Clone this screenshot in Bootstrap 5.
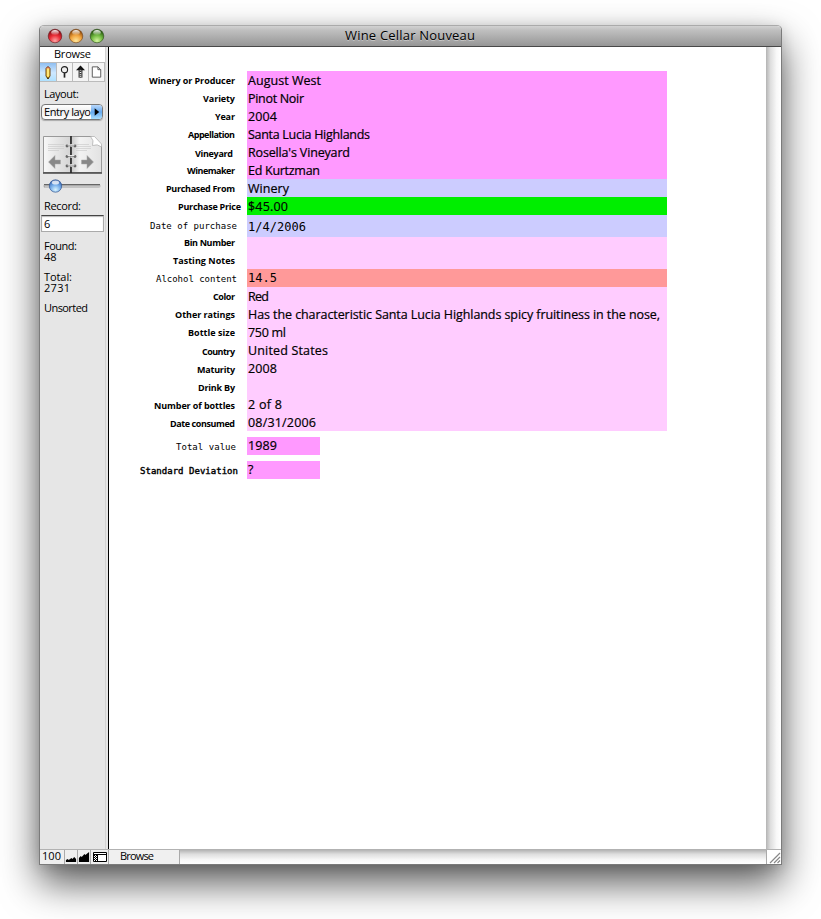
<!DOCTYPE html>
<html lang="en">
<head>
<meta charset="utf-8">
<title>Wine Cellar Nouveau</title>
<link href="https://cdn.jsdelivr.net/npm/bootstrap@5.3.0/dist/css/bootstrap.min.css" rel="stylesheet">
<style>
html, body { height: 919px; overflow: hidden; background: #fff; }
body { font-family: "Open Sans", "Noto Sans", sans-serif; font-size: 11px; line-height: 11px; color: #000; padding: 25px 39px 0; }
.win { width: 743px; height: 840px; border-radius: 5px 5px 0 0; border: 1px solid #7b7b7b; border-top-color: #aaa; background: #fff;
  box-shadow: 0 18px 38px rgba(0,0,0,.66), 0 2px 14px rgba(0,0,0,.12); }
.titlebar { height: 21px; border-radius: 4px 4px 0 0; background: linear-gradient(#d2d2d2, #c0c0c0 20%, #969696); border-bottom: 1px solid #484848; padding-left: 7px; }
.titlebar h1 { font-size: 13px; line-height: 18px; font-weight: 400; text-shadow: 0 1px 0 rgba(255,255,255,.4); margin-left: 240px; }
[data-w] { white-space: nowrap; }
.lights { width: 58px; height: 16px; margin-top: 2px; }
.side { width: 69px; background: #e6e6e6; border-right: 1px solid #000; }
.panel { width: 66px; border-right: 1px solid #d2d2d2; }
.mode { height: 15px; background: #fff; line-height: 14px; }
.tools { height: 20px; background: #f4f4f4; border: solid #bbb; border-width: 1px 0; }
.tools svg { width: 16px; height: 18px; border-right: 1px solid #bbb; }
.tools svg:first-child { width: 17px; background: linear-gradient(#8fbef0, #cfe8ff 55%, #aee1ff); }
.picker { width: 62px; height: 16px; margin: 4px 0 0 1px; border: 1px solid #777; border-radius: 4px; background: linear-gradient(#fff, #eee 50%, #fff); line-height: 13px; overflow: hidden; box-shadow: 0 1px 1px #aaa; padding-left: 2px; }
.picker svg { width: 11px; height: 14px; background: linear-gradient(#b9d8fb, #66a9ef 50%, #a9e0ff); }
.recfield { width: 63px; height: 17px; margin: 4px 0 0 1px; border: 1px solid #aaa; border-top-color: #444; background: #fff; box-shadow: inset 0 1px 1px #bbb; line-height: 15px; padding-left: 2px; }
.pl { padding-left: 4px; }
.sheet { padding-top: 24px; width: 657px; }
.vbar { width: 15px; background: linear-gradient(90deg, #b4b4b4, #dedede 30%, #f8f8f8 70%, #fff); }
.statusbar { height: 15px; border-top: 1px solid #b2b2b2; background: #efefef; line-height: 12px; }
.statusbar svg { height: 14px; border-left: 1px solid #aaa; }
.hbar { background: linear-gradient(#b4b4b4, #dedede 30%, #f8f8f8 70%, #fff); border-left: 1px solid #aaa; }
.tab { width: 71px; padding-left: 11px; background: #f0f0f0; border-left: 1px solid #aaa; }
.rec { height: 18px; }
.rec.tall { height: 22px; }
.rec.short { height: 16px; }
.key { width: 138px; padding-right: 12px; font: bold 9px/18px "Comic Sans MS", "Open Sans", sans-serif; text-align: right; white-space: nowrap; padding-top: 1px; }
.val { width: 420px; padding-left: 1px; font: 12.5px/20px "Comic Sans MS", "Open Sans", sans-serif; -webkit-text-stroke: .2px #000; white-space: nowrap; background: #fcf; height: 100%; }
.mono .key { font: 9px/18px "Andale Mono", "DejaVu Sans Mono", monospace; padding-right: 10px; }
.mono .val { font: 12px/18px "Andale Mono", "DejaVu Sans Mono", monospace; -webkit-text-stroke: 0; }
.tall .key { padding-top: 2px; }
.tall .val { line-height: 24px; }
.short .key { line-height: 10px; }
.low .key { padding-top: 2px; }
.comic .val { font: 12.5px/18px "Comic Sans MS", "Open Sans", sans-serif; -webkit-text-stroke: .2px #000; }
.comic .key { padding-top: 1px; }
.out .key { padding-right: 6px; }
.in .key { padding-right: 14px; }
.edge .key { padding-right: 11px; }
.heavy { -webkit-text-stroke: .4px #000; }
.pink .val { background: #f9f; }
.blue .val { background: #ccf; }
.green .val { background: #0e0; }
.salmon .val { background: #f99; }
.calc { margin-top: 6px; }
.calc .val { width: 73px; }
.calc .key { padding-right: 9px; }
.calc.edge .key { padding-right: 11px; }
</style>
<script src="https://cdn.jsdelivr.net/npm/bootstrap@5.3.0/dist/js/bootstrap.bundle.min.js"></script>
</head>
<body>
<main class="win d-flex flex-column">
  <header class="titlebar d-flex flex-shrink-0">
    <svg class="lights flex-shrink-0" viewBox="0 0 58 16">
      <defs>
        <radialGradient id="r" cx=".5" cy=".85" r=".75"><stop offset="0" stop-color="#ffa5a5"/><stop offset=".55" stop-color="#e92b35"/><stop offset="1" stop-color="#8b1018"/></radialGradient>
        <radialGradient id="o" cx=".5" cy=".85" r=".75"><stop offset="0" stop-color="#ffe79a"/><stop offset=".55" stop-color="#f0a23c"/><stop offset="1" stop-color="#8f4a0a"/></radialGradient>
        <radialGradient id="g" cx=".5" cy=".85" r=".75"><stop offset="0" stop-color="#d5f7a0"/><stop offset=".55" stop-color="#70b840"/><stop offset="1" stop-color="#28590f"/></radialGradient>
        <linearGradient id="h" x2="0" y2="1"><stop offset="0" stop-color="#fff" stop-opacity=".95"/><stop offset="1" stop-color="#fff" stop-opacity=".1"/></linearGradient>
      </defs>
      <g stroke-opacity=".7" stroke-width=".8"><circle cx="8" cy="8" r="6.8" fill="url(#r)" stroke="#5d1015"/><circle cx="29" cy="8" r="6.8" fill="url(#o)" stroke="#6b3b10"/><circle cx="50" cy="8" r="6.8" fill="url(#g)" stroke="#23480f"/></g>
      <g fill="url(#h)"><ellipse cx="8" cy="4.4" rx="3.8" ry="2.5"/><ellipse cx="29" cy="4.4" rx="3.8" ry="2.5"/><ellipse cx="50" cy="4.4" rx="3.8" ry="2.5"/></g>
    </svg>
    <h1 class="mb-0"><span data-w="130">Wine Cellar Nouveau</span></h1>
  </header>
  <div class="d-flex flex-grow-1">
    <aside class="side flex-shrink-0">
      <div class="panel h-100">
        <div class="mode text-center"><span data-w="37">Browse</span></div>
        <div class="tools d-flex">
          <svg viewBox="0 0 16 18"><path d="M6 5.500Q8 2 10 5.500V13L8 16 6 13z" fill="#ffd94a" stroke="#6b4310"/><path d="M6.200 5.500Q8 2.500 9.800 5.500" fill="#e98" stroke="#a33" stroke-width=".6"/><path d="M8 6v7" stroke="#fff3a8"/><path d="M7.200 14.500h1.600L8 16z"/></svg>
          <svg viewBox="0 0 16 18"><circle cx="8" cy="6.500" r="3.300" fill="#eee" stroke="#222" stroke-width="1.200"/><path d="M8 10v5" stroke="#222" stroke-width="1.800"/></svg>
          <svg viewBox="0 0 16 18"><path d="M8 2 3.200 7h9.600z" fill="#111"/><path d="M6.500 6v9M9.500 6v9" stroke="#111"/><path d="M8 6v9" stroke="#333" stroke-width="2" stroke-dasharray="1 1"/></svg>
          <svg viewBox="0 0 16 18"><path d="M3.500 3.500h6l3 3v8h-9zM9.500 3.500v3h3" fill="#fff" stroke="#555"/></svg>
        </div>
        <div class="pl" style="padding-top:6px"><span data-w="35">Layout:</span></div>
        <div class="picker d-flex justify-content-between" style="margin-top:5px"><span data-w="47">Entry layo</span><svg class="flex-shrink-0" viewBox="0 0 12 14"><path d="M4 3 9 7l-5 4z"/></svg></div>
        <svg class="d-block" style="margin:14px 0 0 2px" width="62" height="42" viewBox="0 0 62 42">
          <defs><linearGradient id="pg"><stop offset="0" stop-color="#f8f8f8"/><stop offset="1" stop-color="#d4d4d4"/></linearGradient><linearGradient id="pr"><stop offset="0" stop-color="#c4c4c4"/><stop offset=".3" stop-color="#f2f2f2"/><stop offset="1" stop-color="#e2e2e2"/></linearGradient></defs>
          <path d="M1.500 2.500h27v36h-27z" fill="url(#pg)" stroke="#999"/><path d="M28.500 2.500h21l10 9.500v26.500h-31z" fill="url(#pr)" stroke="#999"/>
          <path d="M48.500 2.500q4 4 2 9 5-2 9 1.500V10l-7-7.500z" fill="#fff" stroke="#aaa" stroke-width=".7"/>
          <path d="M1 39h59" stroke="#444" stroke-width="1.500"/>
          <path d="M6 10.500h16M6 12.500h16M6 14.500h16M6 16.500h11M34 10.500h13M34 12.500h15M34 14.500h15M34 16.500h11" stroke="#ccc" stroke-width=".7"/>
          <path d="M29 2v8M29 13v8M29 24v6M29 33v6" stroke="#222" stroke-width="1.600"/>
          <path d="M25 11.500h8M25 22h8M25 31.500h8" fill="none" stroke="#888" stroke-width="1.600"/>
          <g fill="#666"><circle cx="25" cy="12" r="1.400"/><circle cx="33" cy="12" r="1.400"/><circle cx="25" cy="22.500" r="1.400"/><circle cx="33" cy="22.500" r="1.400"/><circle cx="25" cy="32" r="1.400"/><circle cx="33" cy="32" r="1.400"/></g>
          <path d="M25.500 11h7M25.500 21.500h7M25.500 31h7" stroke="#fff" stroke-width=".8"/>
          <path d="M6.500 28 13 21.500v4.500h5.500v4H13v4.500zM51.500 28 45 21.500v4.500h-5.500v4H45v4.500z" fill="#888" stroke="#aaa" stroke-width=".5"/>
        </svg>
        <svg class="d-block" style="margin:2px 0 0 3px" width="60" height="16" viewBox="0 0 60 16">
          <defs><radialGradient id="kn" cx=".5" cy=".8" r=".8"><stop offset="0" stop-color="#d8f4ff"/><stop offset=".5" stop-color="#77aeea"/><stop offset="1" stop-color="#2f5ca8"/></radialGradient></defs>
          <rect x=".5" y="6" width="57" height="4" rx="2" fill="#aaa"/><path d="M1 6.500h56" stroke="#666"/><path d="M2 9h55" stroke="#ddd"/>
          <circle cx="12.500" cy="8" r="6.200" fill="url(#kn)" stroke="#34568f" stroke-width=".7"/><ellipse cx="12.500" cy="4.600" rx="3.600" ry="2" fill="#fff" opacity=".75"/>
        </svg>
        <div class="pl" style="padding-top:6px"><span data-w="37">Record:</span></div>
        <div class="recfield"><span>6</span></div>
        <div class="pl" style="padding-top:8px"><span data-w="33">Found:</span><br><span data-w="12.500">48</span></div>
        <div class="pl" style="padding-top:9px"><span data-w="28">Total:</span><br><span data-w="26">2731</span></div>
        <div class="pl" style="padding-top:9px"><span data-w="44">Unsorted</span></div>
      </div>
    </aside>
    <section class="sheet">
      <div class="rec pink d-flex"><div class="key"><span data-w="86">Winery or Producer</span></div><div class="val"><span data-w="73">August West</span></div></div>
      <div class="rec pink d-flex"><div class="key"><span data-w="32">Variety</span></div><div class="val"><span data-w="56">Pinot Noir</span></div></div>
      <div class="rec pink d-flex"><div class="key"><span data-w="20">Year</span></div><div class="val"><span data-w="29">2004</span></div></div>
      <div class="rec pink d-flex"><div class="key"><span data-w="47">Appellation</span></div><div class="val"><span data-w="122">Santa Lucia Highlands</span></div></div>
      <div class="rec pink d-flex low in"><div class="key"><span data-w="38">Vineyard</span></div><div class="val"><span data-w="102">Rosella's Vineyard</span></div></div>
      <div class="rec pink d-flex"><div class="key"><span data-w="48">Winemaker</span></div><div class="val"><span data-w="72">Ed Kurtzman</span></div></div>
      <div class="rec blue d-flex"><div class="key"><span data-w="69">Purchased From</span></div><div class="val"><span data-w="41">Winery</span></div></div>
      <div class="rec green d-flex out"><div class="key"><span data-w="63">Purchase Price</span></div><div class="val"><span data-w="40">$45.00</span></div></div>
      <div class="rec blue d-flex mono tall"><div class="key"><span data-w="87">Date of purchase</span></div><div class="val"><span data-w="58">1/4/2006</span></div></div>
      <div class="rec short d-flex"><div class="key"><span data-w="51">Bin Number</span></div><div class="val"></div></div>
      <div class="rec short d-flex"><div class="key" style="padding-top:3px"><span data-w="62">Tasting Notes</span></div><div class="val"></div></div>
      <div class="rec salmon d-flex mono"><div class="key"><span data-w="81">Alcohol content</span></div><div class="val"><span data-w="29">14.5</span></div></div>
      <div class="rec d-flex"><div class="key"><span data-w="22">Color</span></div><div class="val"><span data-w="21">Red</span></div></div>
      <div class="rec d-flex"><div class="key"><span data-w="60">Other ratings</span></div><div class="val"><span data-w="412">Has the characteristic Santa Lucia Highlands spicy fruitiness in the nose,</span></div></div>
      <div class="rec d-flex"><div class="key"><span data-w="47">Bottle size</span></div><div class="val"><span data-w="38">750 ml</span></div></div>
      <div class="rec d-flex low"><div class="key"><span data-w="33">Country</span></div><div class="val"><span data-w="80">United States</span></div></div>
      <div class="rec d-flex low"><div class="key"><span data-w="38">Maturity</span></div><div class="val"><span data-w="29">2008</span></div></div>
      <div class="rec d-flex low"><div class="key"><span data-w="37">Drink By</span></div><div class="val"></div></div>
      <div class="rec d-flex low"><div class="key"><span data-w="81">Number of bottles</span></div><div class="val"><span data-w="34">2 of 8</span></div></div>
      <div class="rec d-flex low"><div class="key"><span data-w="65">Date consumed</span></div><div class="val"><span data-w="68">08/31/2006</span></div></div>
      <div class="rec pink calc mono comic edge d-flex"><div class="key"><span data-w="60">Total value</span></div><div class="val"><span data-w="29">1989</span></div></div>
      <div class="rec pink calc mono comic d-flex"><div class="key"><span data-w="98" class="heavy">Standard Deviation</span></div><div class="val"><span>?</span></div></div>
    </section>
    <div class="vbar flex-shrink-0"></div>
  </div>
  <footer class="statusbar d-flex flex-shrink-0">
    <div style="width:24px;padding-left:2px"><span data-w="19">100</span></div>
    <svg width="13" viewBox="0 0 13 14" preserveAspectRatio="none"><path d="M1 12v-2l2-1 1 1 3-2 1 1 2-2 2 2v3z"/></svg>
    <svg width="13" viewBox="0 0 13 14" preserveAspectRatio="none"><path d="M1 12V8l2-2 1 1 3-3 1 1 4-3v10z"/></svg>
    <svg width="18" viewBox="0 0 17 14"><path d="M2.500 2.500h13v9h-13z" fill="#fff" stroke="#000"/><path d="M2 4.500h14M6.500 4v8" stroke="#000"/><path d="M3 5.500h3M3 7.500h3M3 9.500h3" stroke="#000" stroke-dasharray="1 1"/><path d="M3 6.500h3M3 8.500h3M3 10.500h3" stroke="#000" stroke-dasharray="1 1" stroke-dashoffset="1"/></svg>
    <div class="tab"><span data-w="34">Browse</span></div>
    <div class="hbar flex-grow-1"></div>
    <svg width="15" viewBox="0 0 14 14" style="background:#fff"><path d="M3 13 13 3M7 13l6-6M10.500 13 13 10.500" stroke="#888" stroke-width="1.200"/></svg>
  </footer>
</main>
<script>
document.querySelectorAll('[data-w]').forEach(function (el) {
  var n = el.textContent.length, w = el.getBoundingClientRect().width;
  var s = (parseFloat(el.dataset.w) - w) / (n - 1);
  el.style.letterSpacing = s + 'px';
  el.style.marginRight = -s + 'px';
});
</script>
</body>
</html>
